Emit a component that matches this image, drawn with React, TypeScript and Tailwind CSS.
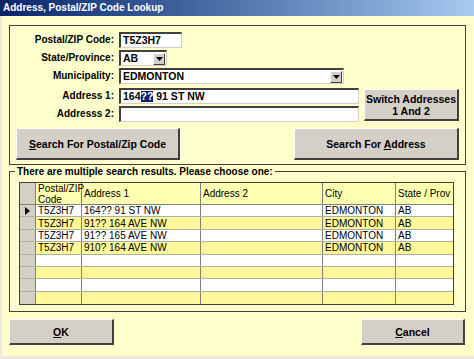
import React from "react";

type Row = { postal: string; addr1: string; addr2: string; city: string; prov: string };

const rows: Row[] = [
  { postal: "T5Z3H7", addr1: "164?? 91 ST NW", addr2: "", city: "EDMONTON", prov: "AB" },
  { postal: "T5Z3H7", addr1: "91?? 164 AVE NW", addr2: "", city: "EDMONTON", prov: "AB" },
  { postal: "T5Z3H7", addr1: "91?? 165 AVE NW", addr2: "", city: "EDMONTON", prov: "AB" },
  { postal: "T5Z3H7", addr1: "910? 164 AVE NW", addr2: "", city: "EDMONTON", prov: "AB" },
  { postal: "", addr1: "", addr2: "", city: "", prov: "" },
  { postal: "", addr1: "", addr2: "", city: "", prov: "" },
  { postal: "", addr1: "", addr2: "", city: "", prov: "" },
  { postal: "", addr1: "", addr2: "", city: "", prov: "" },
];

const font = { fontFamily: '"Liberation Sans", Arial, sans-serif' };

function Field({ width, children }: { width: string; children?: React.ReactNode }) {
  return (
    <div
      className={`${width} h-[16px] bg-white border-t-2 border-l-2 border-t-[#404040] border-l-[#404040] border-r border-b border-r-[#d4d0c8] border-b-[#d4d0c8] flex items-center pl-[2px] text-[10.5px] font-bold text-black leading-none`}
    >
      {children}
    </div>
  );
}

function Select({ width, value }: { width: string; value: string }) {
  return (
    <div
      className={`${width} h-[16px] bg-white border-t-2 border-l-2 border-t-[#404040] border-l-[#404040] border-r border-b border-r-[#d4d0c8] border-b-[#d4d0c8] flex items-center text-[10.5px] font-bold leading-none`}
    >
      <span className="flex-1 pl-[2px]">{value}</span>
      <div className="w-[12px] h-[12px] mr-[1px] bg-[#d4d0c8] border border-t-white border-l-white border-r-[#404040] border-b-[#404040] flex items-center justify-center">
        <svg width="7" height="4" viewBox="0 0 7 4">
          <path d="M0 0h7L3.5 4z" fill="#000" />
        </svg>
      </div>
    </div>
  );
}

function Label({ children }: { children: React.ReactNode }) {
  return <div className="w-[109px] pr-[5px] text-right text-[10px] font-bold leading-none text-black">{children}</div>;
}

function Btn({ className, children }: { className: string; children: React.ReactNode }) {
  return (
    <div
      className={`${className} bg-[#d4d0c8] border-t border-l border-t-white border-l-white border-r-2 border-b-2 border-r-[#404040] border-b-[#404040] flex items-center justify-center text-center text-[10.5px] font-bold leading-[12px] text-black`}
    >
      {children}
    </div>
  );
}

const cols = ["w-[16px]", "w-[46px]", "w-[119px]", "w-[122px]", "w-[73px]", "flex-1"];

export default function App() {
  return (
    <div className="w-[474px] h-[359px] bg-[#ece9d8] overflow-hidden flex flex-col" style={font}>
      {/* Title bar */}
      <div className="h-[16px] bg-gradient-to-r from-[#0a246a] to-[#a6caf0] flex items-center pl-[3px] text-white text-[10px] font-bold leading-none">
        Address, Postal/ZIP Code Lookup
      </div>

      {/* Body */}
      <div className="flex-1 ml-[2px] mb-[3px] bg-[#ffffcc] pt-[9px] pl-[7px] pr-[8px] flex flex-col">
        {/* Lookup group */}
        <div className="h-[140px] border border-[#404040] pt-[6px] px-[6px] flex flex-col">
          <div className="flex flex-col gap-[2px] -ml-[6px]">
            <div className="flex items-center">
              <Label>Postal/ZIP Code:</Label>
              <Field width="w-[63px]">T5Z3H7</Field>
            </div>
            <div className="flex items-center">
              <Label>State/Province:</Label>
              <Select width="w-[48px]" value="AB" />
            </div>
            <div className="flex items-center">
              <Label>Municipality:</Label>
              <Select width="w-[225px]" value="EDMONTON" />
            </div>
            <div className="flex items-start mt-[2px]">
              <div className="flex flex-col gap-[2px]">
                <div className="flex items-center">
                  <Label>Address 1:</Label>
                  <Field width="w-[240px]">
                    164<span className="bg-[#0a246a] text-white">??</span>&nbsp;91 ST NW
                  </Field>
                </div>
                <div className="flex items-center">
                  <Label>Addresss 2:</Label>
                  <Field width="w-[240px]" />
                </div>
              </div>
              <Btn className="ml-[5px] mt-[1px] w-[95px] h-[32px]">
                <span>
                  Switch Addresses
                  <br />1 And 2
                </span>
              </Btn>
            </div>
          </div>
          <div className="flex justify-between mt-[6px]">
            <Btn className="w-[164px] h-[32px]">
              <span>
                <u>S</u>earch For Postal/Zip Code
              </span>
            </Btn>
            <Btn className="w-[165px] h-[32px]">
              <span>
                Search For <u>A</u>ddress
              </span>
            </Btn>
          </div>
        </div>

        {/* Results group */}
        <fieldset className="h-[147px] border border-[#404040] pl-[9px] pr-[11px] pb-[8px]">
          <legend className="-ml-[4px] px-[2px] text-[10px] font-bold leading-[13px] text-black">
            There are multiple search results. Please choose one:
          </legend>
          <div className="mt-[4px] border border-[#404040] bg-white text-[10px] leading-[11px] text-black">
            <div className="flex h-[22px] bg-[#ffffb0] border-b border-[#808080]">
              <div className={`${cols[0]} bg-[#d4d0c8] border-r border-[#808080]`} />
              <div className={`${cols[1]} border-r border-[#808080] pl-[2px]`}>Postal/ZIP Code</div>
              <div className={`${cols[2]} border-r border-[#808080] pl-[2px] flex items-center`}>Address 1</div>
              <div className={`${cols[3]} border-r border-[#808080] pl-[2px] flex items-center`}>Address 2</div>
              <div className={`${cols[4]} border-r border-[#808080] pl-[2px] flex items-center`}>City</div>
              <div className={`${cols[5]} pl-[2px] flex items-center`}>State / Prov</div>
            </div>
            {rows.map((r, i) => (
              <div
                key={i}
                className={`flex h-[12.4px] ${i % 2 === 1 ? "bg-[#fff799]" : "bg-white"} ${i < rows.length - 1 ? "border-b border-[#b0b0a0]" : ""}`}
              >
                <div className={`${cols[0]} bg-[#d4d0c8] border-r border-[#808080] flex items-center justify-center`}>
                  {i === 0 && (
                    <svg width="5" height="8" viewBox="0 0 5 8">
                      <path d="M0 0l5 4-5 4z" fill="#000" />
                    </svg>
                  )}
                </div>
                <div className={`${cols[1]} border-r border-[#808080] pl-[2px] flex items-center`}>{r.postal}</div>
                <div className={`${cols[2]} border-r border-[#808080] pl-[2px] flex items-center`}>{r.addr1}</div>
                <div className={`${cols[3]} border-r border-[#808080] pl-[2px] flex items-center`}>{r.addr2}</div>
                <div className={`${cols[4]} border-r border-[#808080] pl-[2px] flex items-center`}>{r.city}</div>
                <div className={`${cols[5]} pl-[2px] flex items-center`}>{r.prov}</div>
              </div>
            ))}
          </div>
        </fieldset>

        {/* Dialog buttons */}
        <div className="flex justify-between mt-[7px] pr-[1px]">
          <Btn className="w-[105px] h-[26px]">
            <span>
              <u>O</u>K
            </span>
          </Btn>
          <Btn className="w-[104px] h-[26px]">
            <span>
              <u>C</u>ancel
            </span>
          </Btn>
        </div>
      </div>
    </div>
  );
}
